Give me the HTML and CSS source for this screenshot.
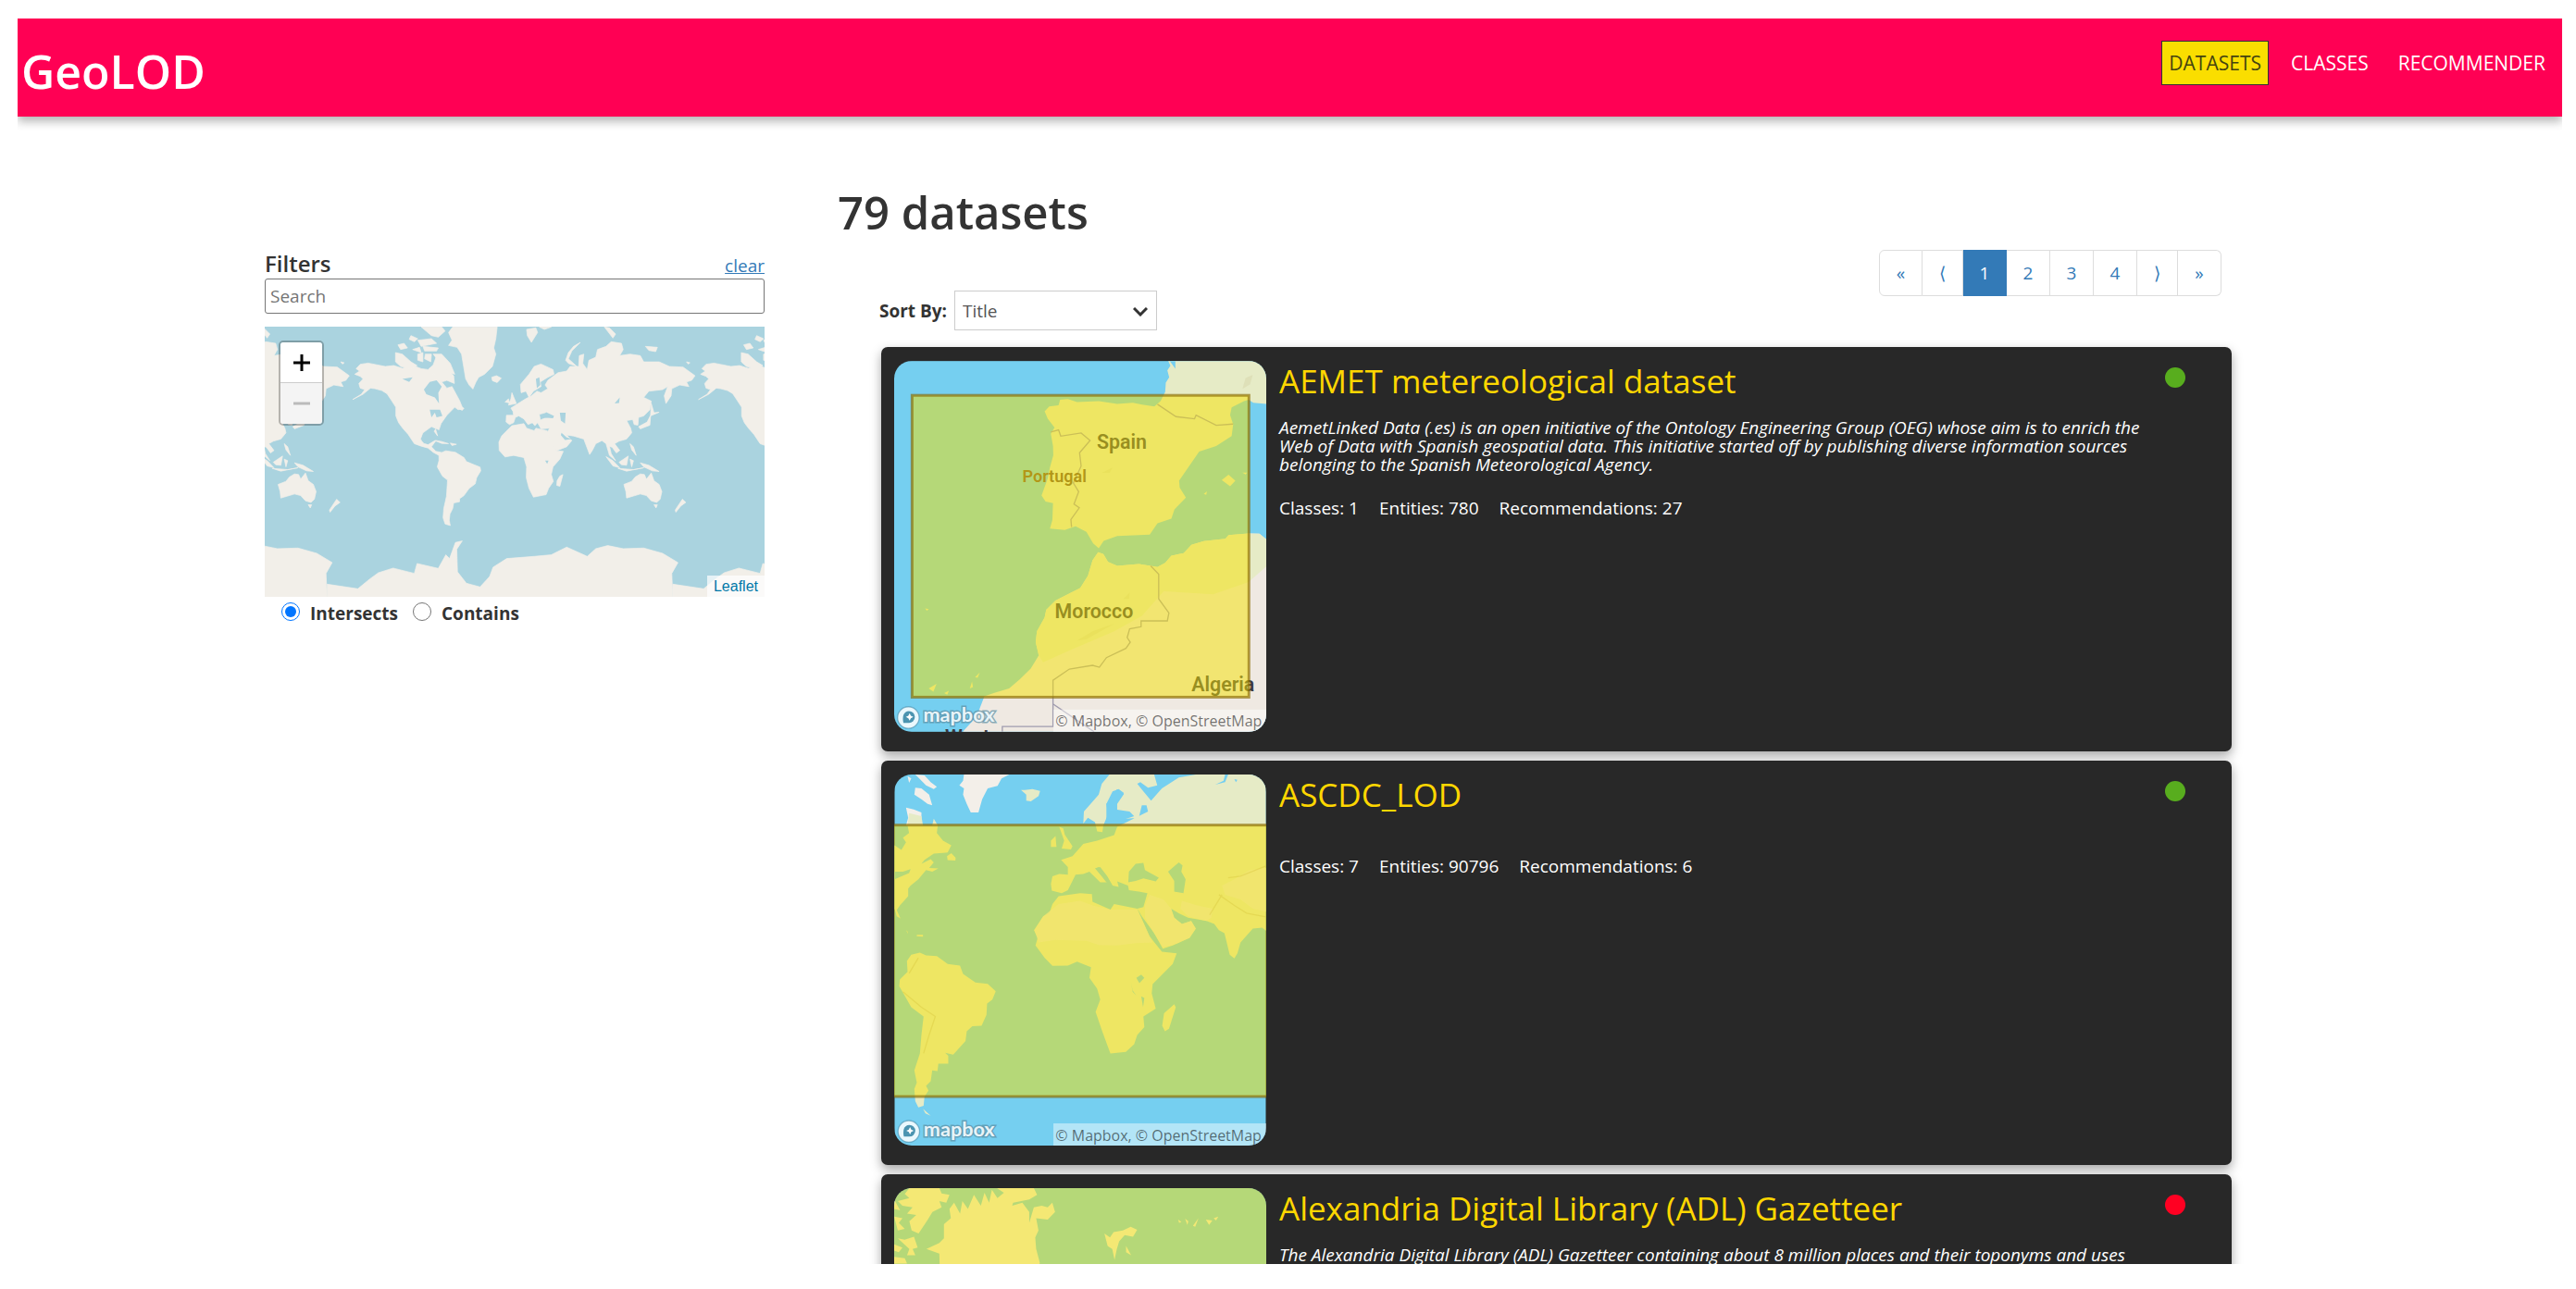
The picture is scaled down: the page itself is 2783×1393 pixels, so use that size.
FILE: index.html
```html
<!DOCTYPE html>
<html lang="en">
<head>
<meta charset="utf-8">
<title>GeoLOD</title>
<link rel="stylesheet" href="styles.css">
</head>
<body>
<div class="app">
  <header class="topbar">
    <h1 class="brand">GeoLOD</h1>
    <nav class="nav">
      <a class="nav-link active" href="#datasets">DATASETS</a>
      <a class="nav-link" href="#classes">CLASSES</a>
      <a class="nav-link" href="#recommender">RECOMMENDER</a>
    </nav>
  </header>

  <main class="content">
    <aside class="filters">
      <div class="filters-head">
        <h2 class="filters-title">Filters</h2>
        <a class="clear" href="#clear">clear</a>
      </div>
      <input class="search" type="text" placeholder="Search" aria-label="Search">
      <div class="map">
        <svg class="map-tiles" viewBox="43 311 1460 875" preserveAspectRatio="none" aria-hidden="true">
          <defs>
            <g id="world">
              <!-- North and Central America -->
              <path d="M306 465L320 455 310 447 322 433 345 429 395 440 420 437 445 446 475 436 500 447 520 450 535 435 545 405 560 420 570 445 595 470 597 495 575 485 560 490 575 510 590 505 612 550 622 577 608 580 598 572 575 598 558 625 552 645 530 635 505 655 498 675 508 690 520 692 528 677 542 682 530 700 543 715 558 718 552 728 535 718 520 704 500 698 480 690 462 660 446 640 434 622 426 600 426 572 412 548 400 528 385 518 365 512 352 510 330 530 300 547 325 530 335 515 322 510 318 495 330 480 322 472Z"/>
              <path d="M542 642L548 665 538 650Z"/>
              <path d="M425 395L445 400 470 425 488 437 470 447 440 440 425 425ZM432 370L450 365 460 380 440 385ZM470 340L490 350 480 360 465 352ZM490 355L530 350 545 365 500 375ZM500 312L560 312 570 325 550 345 530 340ZM475 385L495 378 500 395ZM490 400L505 395 505 425 490 420ZM512 400L530 400 528 425 510 415ZM535 400L560 400 585 430 598 465 580 460 560 435ZM505 375L550 380 545 390 510 390ZM612 570L625 575 620 582 612 578ZM535 462L550 475 545 490 530 480Z"/>
              <!-- Greenland and Iceland -->
              <path d="M580 330L592 312 722 312 718 350 712 380 718 400 708 440 685 465 668 475 660 490 651 513 640 500 630 480 624 440 618 400 605 378 580 372 590 355ZM706 475L720 470 734 478 722 492 708 486Z"/>
              <path d="M535 678L560 683 580 690 560 689ZM585 688L603 692 590 696Z"/>
              <!-- South America -->
              <path d="M552 722L572 713 600 718 625 735 632 748 672 766 674 778 662 800 658 820 640 835 625 858 612 868 612 878 595 882 592 900 584 918 582 938 585 955 570 950 564 930 566 900 574 860 577 808 562 795 547 765 552 745Z"/>
              <!-- Europe and Asia -->
              <path d="M749 598L770 598 768 585 762 575 790 555 805 545 822 535 838 520 850 525 870 512 862 500 870 485 885 472 900 460 925 455 935 440 960 440 962 405 975 400 972 430 985 450 990 420 1010 410 1015 385 1040 375 1055 360 1085 365 1090 385 1080 405 1110 400 1140 405 1150 425 1195 425 1225 440 1265 442 1300 470 1290 485 1275 490 1282 505 1255 500 1232 512 1230 535 1215 560 1210 535 1220 505 1205 515 1165 520 1150 540 1172 552 1168 580 1150 600 1135 605 1133 630 1122 628 1118 612 1100 615 1112 640 1115 655 1100 675 1078 682 1065 690 1080 712 1070 720 1058 702 1050 698 1055 722 1068 745 1050 728 1040 690 1028 680 1010 690 1000 712 992 725 975 675 945 665 925 662 940 680 925 700 895 713 882 690 868 655 875 640 850 642 838 618 860 608 880 605 862 590 845 595 848 612 832 632 820 615 800 590 820 610 830 620 812 628 800 610 785 600 775 605 770 622 758 628 748 620Z"/>
              <path d="M790 498L815 465 830 440 850 432 885 450 888 465 870 475 848 490 850 505 828 520 815 540 806 520 792 525Z"/>
              <path d="M765 525L778 560 755 565 762 545ZM745 555L755 545 758 558ZM922 420L930 395 945 375 965 362 940 390 930 415 955 440 930 430ZM808 320L835 315 840 330 822 362 810 340ZM845 312L880 312 860 320ZM1035 312L1050 315 1068 335 1060 348ZM1155 375L1190 378 1185 392 1165 388ZM1275 425L1285 428 1280 432ZM1172 560L1180 590 1195 588 1170 600 1168 630 1140 642 1135 635 1160 620 1170 598Z"/>
              <!-- Africa -->
              <path d="M765 632L800 625 808 640 830 648 835 640 868 648 880 680 895 713 915 715 905 740 885 765 880 790 886 812 872 835 865 855 828 863 815 835 807 800 808 765 800 735 770 728 745 733 728 712 727 685 735 665 748 650ZM905 795L914 790 905 828 896 825 897 810Z"/>
              <!-- South-east Asia and Oceania -->
              <path d="M1040 732L1060 745 1080 768 1060 762ZM1078 750L1105 730 1100 760 1085 758ZM1110 690L1120 700 1128 728 1115 710ZM1075 770L1120 774 1150 768 1100 779ZM1110 740L1120 745 1115 765ZM1140 752L1165 760 1195 780 1175 778 1150 765ZM1092 822L1115 812 1125 798 1140 788 1152 790 1158 805 1172 785 1180 810 1195 822 1203 845 1198 870 1188 880 1172 875 1158 858 1140 853 1100 866 1098 845ZM1180 888L1190 888 1186 898ZM1263 870L1273 880 1258 892 1244 912 1242 905Z"/>
              <!-- Antarctica -->
              <path d="M225 1190L225 1145 315 1160 350 1128 375 1108 418 1093 480 1110 488 1078 550 1094 572 1050 583 1062 600 1010 620 1005 604 1032 606 1105 632 1142 672 1154 700 1120 710 1090 750 1062 830 1055 880 1050 925 1025 985 1055 1010 1030 1045 1020 1090 1030 1150 1028 1205 1045 1250 1075 1232 1110 1235 1190Z"/>
            </g>
          </defs>
          <rect class="sea-osm" x="43" y="311" width="1460" height="875"/>
          <g class="land-osm">
            <use href="#world" x="-1010"/><use href="#world"/><use href="#world" x="1010"/>
          </g>
          <g class="sea-osm">
            <path d="M508 515L525 490 545 485 560 505 550 525 552 560 540 540 515 530Z"/>
            <path d="M525 580L555 580 562 600 545 605 540 590 530 605ZM445 480L475 475 465 490Z"/>
            <path d="M852 605L865 588 888 600 885 608ZM905 590L922 590 920 625 908 615ZM835 480L845 475 848 500 838 510ZM910 655L925 670 940 675 920 678 908 662ZM862 745L872 745 868 755ZM1065 560L1080 540 1078 558Z"/>
            <path d="M505 660L530 650 545 675 520 692 502 682Z"/>
          </g>
        </svg>
        <div class="zoom">
          <button class="zoom-btn" type="button" aria-label="Zoom in"><svg viewBox="0 0 18 18"><path d="M9 0V18M0 9H18"/></svg></button>
          <button class="zoom-btn" type="button" aria-label="Zoom out" disabled><svg viewBox="0 0 18 18"><path d="M0 9H18"/></svg></button>
        </div>
        <a class="map-credit" href="#leaflet">Leaflet</a>
      </div>
      <div class="modes">
        <label class="mode"><input type="radio" name="mode" checked>Intersects</label>
        <label class="mode"><input type="radio" name="mode">Contains</label>
      </div>
    </aside>

    <section class="results">
      <h2 class="count">79 datasets</h2>
      <div class="toolbar">
        <div class="sort">
          <label for="sort">Sort By:</label>
          <span class="select-wrap">
            <select id="sort" class="select"><option>Title</option><option>Entities</option></select>
            <svg class="chevron" viewBox="0 0 16 10" aria-hidden="true"><path d="M1 1L8 8 15 1"/></svg>
          </span>
        </div>
        <nav class="pages" aria-label="Pages">
          <a class="page edge" href="#first">«</a>
          <a class="page" href="#prev">⟨</a>
          <a class="page num current" href="#1">1</a>
          <a class="page num" href="#2">2</a>
          <a class="page num" href="#3">3</a>
          <a class="page num" href="#4">4</a>
          <a class="page" href="#next">⟩</a>
          <a class="page edge" href="#last">»</a>
        </nav>
      </div>

      <div class="cards">
        <article class="card">
          <svg class="thumb" viewBox="78 75 1204 1200" aria-hidden="true">
            <defs>
              <g id="mapbox-logo">
                <circle class="logo-disc" cx="124" cy="1229" r="35"/>
                <path class="logo-drop" d="M108 1246C104 1228 107 1208 126 1208A19 19 0 1 1 126 1246Z"/>
                <path class="logo-star" d="M128 1215L132 1223 140 1227 132 1231 128 1239 124 1231 116 1227 124 1223Z"/>
                <text class="logo-word" x="172" y="1244">mapbox</text>
              </g>
              <g id="mapbox-credit">
                <rect class="credit-bg" x="593" y="1203" width="700" height="80"/>
                <text class="credit" x="600" y="1259">© Mapbox, © OpenStreetMap</text>
              </g>
            </defs>
            <rect class="sea" x="78" y="75" width="1204" height="1200"/>
            <path class="green" d="M965 75L972 90 962 105 968 128 957 145 955 175 940 205 920 222 880 216 850 210 800 214 740 205 670 208 640 198 615 200 610 218 580 222 565 238 575 262 597 290 585 310 592 350 593 380 582 420 575 455 555 510 568 530 592 535 590 590 582 617 630 622 665 610 700 628 722 665 740 681 756 657 800 641 905 637 930 600 975 585 985 555 1022 517 1002 485 1000 462 1050 390 1065 368 1120 350 1170 318 1175 280 1165 250 1170 225 1210 205 1225 200 1240 210 1282 214 1282 75Z"/>
            <path class="sea" d="M970 75L988 100 988 75Z"/>
            <path class="sand" d="M738 694L755 700 770 725 800 738 870 732 930 742 955 728 975 705 1015 697 1040 670 1080 658 1150 650 1160 638 1225 633 1260 634 1282 652 1282 1275 300 1275 345 1225 370 1160 400 1150 450 1135 485 1105 520 1070 546 1028 536 985 540 950 565 905 570 880 600 850 650 825 680 810 705 770 720 720Z"/>
            <path class="green" d="M738 694L755 700 770 725 800 738 870 732 930 742 955 728 975 705 1015 697 1040 670 1080 658 1150 650 1160 638 1225 633 1260 634 1282 652 1282 740 1225 790 1110 830 950 820 880 900 790 950 650 1010 560 1050 546 1028 536 985 540 950 565 905 570 880 600 850 650 825 680 810 705 770 720 720Z"/>
            <path class="green" d="M1138 460L1160 443 1182 462 1165 480ZM1205 436L1220 436 1215 442ZM1080 505L1090 497 1088 508ZM190 1135L215 1120 205 1145ZM240 1150L255 1142 250 1155ZM323 1135L330 1112 333 1130ZM340 1098L355 1083 348 1100ZM178 876L190 878 184 883Z"/>
            <path class="terrain" d="M1205 165L1215 130 1238 120 1230 150ZM750 437L785 420 775 437ZM820 845L840 825 838 845ZM670 980L720 950 790 925 700 975Z"/>
            <path class="border" d="M930 215L990 255 1050 262 1055 250 1120 283 1175 279M585 305L610 298 617 318 683 308 712 332 678 372 683 415 658 470 675 498 660 538 677 550 650 588 652 612M908 738L934 765V845L967 890 962 916H877V935L840 942 832 970 842 985 828 1005 765 1035 742 1066 720 1060 645 1072 592 1108V1258H428V1275M592 1185L725 1275"/>
            <g class="place">
              <text x="734" y="359">Spain</text>
              <text class="place-small" x="493" y="467">Portugal</text>
              <text x="598" y="908">Morocco</text>
              <text x="1040" y="1144">Algeria</text>
              <text x="243" y="1313">West</text>
            </g>
            <rect class="extent" x="136" y="186" width="1090" height="977"/>
            <use href="#mapbox-logo"/><use href="#mapbox-credit"/>
          </svg>
          <div class="info">
            <h3 class="title"><a href="#aemet">AEMET metereological dataset</a></h3>
            <p class="desc">AemetLinked Data (.es) is an open initiative of the Ontology Engineering Group (OEG) whose aim is to enrich the Web of Data with Spanish geospatial data. This initiative started off by publishing diverse information sources belonging to the Spanish Meteorological Agency.</p>
            <div class="stats"><span>Classes: 1</span><span>Entities: 780</span><span>Recommendations: 27</span></div>
          </div>
          <span class="status up"></span>
        </article>

        <article class="card">
          <svg class="thumb" viewBox="78 65 1204 1204" aria-hidden="true">
            <rect class="sea" x="78" y="65" width="1204" height="1204"/>
            <path class="ice" d="M303 65L450 65 425 78 412 102 380 110 362 145 350 188 325 188 312 160 300 130 303 110 288 100 300 85ZM145 65L175 68 195 90 215 105 205 112 180 100 160 80ZM145 108L165 110 190 130 200 165 185 160 165 145 142 130ZM120 70L132 78 125 92ZM115 172L140 178 165 188 165 230 115 230 122 205Z"/>
            <path class="green" d="M488 115L500 115 525 112 550 118 545 135 520 152 505 150 505 130Z"/>
            <!-- North America -->
            <path class="green" d="M78 295L100 310 115 285 105 270 125 255 120 230 125 190 165 200 170 230 200 230 205 208 218 230 215 255 235 280 262 295 250 318 205 322 175 342 165 355 195 340 205 350 190 368 220 370 200 380 180 375 155 405 130 425 122 435 122 460 95 490 85 505 97 532 85 525 78 500ZM248 330L262 320 276 335 275 344 250 343Z"/>
            <path class="sea" d="M78 380L105 380 130 372 125 385 78 405Z"/>
            <!-- South America -->
            <path class="green" d="M132 650L160 643 180 652 215 654 250 680 290 685 300 712 340 740 380 744 406 768 395 795 378 808 376 845 360 880 330 882 312 898 308 930 268 974 242 968 252 978 252 1003 220 1003 217 1027 200 1025 195 1060 180 1075 188 1090 175 1110 172 1140 155 1145 145 1125 142 1085 150 1065 142 1025 160 970 165 910 172 850 132 820 115 790 93 752 95 730 120 705 118 670ZM170 1150L195 1172 178 1165ZM115 570L120 575 122 582ZM150 585L170 585 170 591 150 590Z"/>
            <!-- Scandinavia and Eurasia -->
            <path class="green" d="M690 224L692 185 740 130 750 95 775 65 920 65 930 100 900 108 875 90 865 95 885 120 910 150 945 110 1000 75 1055 65 1282 65 1282 572 1270 562 1240 565 1200 610 1190 645 1180 662 1165 650 1148 580 1130 570 1115 550 1090 540 1030 530 1000 515 975 500 985 530 1010 550 1040 540 1055 565 1035 595 980 620 948 630 920 580 880 525 865 500 885 495 898 450 870 445 838 440 835 425 800 412 805 430 785 425 765 395 740 365 728 370 768 415 745 415 710 380 690 388 665 390 640 440 620 450 588 442 585 420 590 395 612 388 640 390 640 365 618 342 655 330 690 290 735 280 790 262 800 235 850 210 900 185 895 165 880 165 870 205 810 210 800 195 800 160 822 128 800 112 765 160 770 195 755 230 752 252 735 250 728 220 705 205Z"/>
            <path class="sea" d="M765 160L785 120 805 112 822 125 800 150 795 178 840 185 855 200 810 215 765 210ZM1118 98L1150 90 1160 65 1150 65 1145 85ZM1180 80L1190 82 1185 90Z"/>
            <path class="sea" d="M836 415L838 380 860 355 885 352 890 375 935 400 925 412 885 402 860 410ZM965 380L1000 350 1012 360 1008 380 1022 405 1015 450 985 445 985 410ZM730 370L745 365 768 395 785 425 765 415Z"/>
            <path class="green" d="M612 235L625 240 630 260 655 298 650 308 620 305 628 280ZM585 280L600 265 603 300 585 300Z"/>
            <!-- Africa -->
            <path class="green" d="M610 460L680 450 718 453 720 478 778 503 790 485 865 500 885 545 905 590 945 640 993 645 980 680 915 745 912 775 925 825 885 850 888 885 865 910 855 940 828 965 778 970 752 900 730 835 745 795 735 760 710 725 715 690 670 672 640 685 590 686 565 660 535 620 542 595 530 570 560 525 580 515 590 485ZM985 810L990 820 968 890 955 898 946 880 952 840Z"/>
            <path class="sand" d="M560 525L610 485 680 475 720 490 778 503 865 503 900 580 915 610 860 612 800 620 740 618 700 605 600 602 545 610 532 570ZM905 455L950 470 975 500 985 530 1010 550 1040 540 1055 565 1035 595 980 618 948 625 920 580 890 530 890 490ZM1010 475L1060 490 1110 500 1105 530 1090 540 1030 525 1005 500ZM1140 425L1180 405 1230 375 1282 368 1282 510 1240 500 1200 470 1150 455Z"/>
            <path class="sea" d="M862 725L878 714 888 725 872 742ZM845 740L850 765 862 782 850 770ZM878 785L888 790 884 820Z"/>
            <path class="relief" d="M1160 400L1200 395 1282 362M1130 455L1180 490 1220 515 1282 527M1100 520L1140 455M155 660L125 710M105 770L165 820 210 850 190 910 172 970"/>
            <rect class="extent" x="60" y="229" width="1240" height="881"/>
            <g transform="translate(0 -6)"><use href="#mapbox-logo"/><use href="#mapbox-credit"/></g>
          </svg>
          <div class="info">
            <h3 class="title"><a href="#ascdc">ASCDC_LOD</a></h3>
            <p class="desc"></p>
            <div class="stats"><span>Classes: 7</span><span>Entities: 90796</span><span>Recommendations: 6</span></div>
          </div>
          <span class="status up"></span>
        </article>

        <article class="card">
          <svg class="thumb" viewBox="52 103 807 1200" preserveAspectRatio="none" aria-hidden="true">
            <rect class="sea" x="52" y="103" width="807" height="1200"/>
            <path class="ice" d="M85 103L150 103 155 120 172 125 165 150 150 145 155 165 135 180 125 205 105 250 90 240 85 210 100 190 80 185 92 165 70 160 60 145 85 135 75 122ZM52 140L65 175 52 170ZM52 195L70 200 62 215 75 235 60 240ZM60 265L75 270 95 260 103 295 92 300 98 320 80 320 85 300ZM52 285L70 295 62 310 52 305ZM52 325L75 330 80 347 52 347Z"/>
            <path class="ice" d="M275 103L355 103 362 125 345 140 310 150 308 160 330 150 345 180 345 215 355 165 372 160 385 165 395 150 401 180 385 205 360 200 365 240 358 262 360 300 368 345 350 420 152 420 150 315 122 300 150 280 160 265 160 220 175 200 172 170 182 150 195 185 200 145 212 170 225 125 240 160 248 118 258 150 264 108 276 135 290 118Z"/>
            <path class="ice" d="M508 250L520 262 528 245 548 240 565 228 579 238 570 260 552 255 540 275 535 300 530 335 525 300 515 290ZM555 290L566 320 555 310ZM668 205L675 212 670 215ZM683 202L690 210 688 222ZM700 225L712 200 705 228ZM728 205L742 208 735 222ZM745 200L755 195 750 208Z"/>
            <rect class="extent" x="20" y="60" width="900" height="1300"/>
          </svg>
          <div class="info">
            <h3 class="title"><a href="#adl">Alexandria Digital Library (ADL) Gazetteer</a></h3>
            <p class="desc">The Alexandria Digital Library (ADL) Gazetteer containing about 8 million places and their toponyms and uses</p>
          </div>
          <span class="status down"></span>
        </article>
      </div>
    </section>
  </main>
</div>
</body>
</html>
```
FILE: styles.css
```css
* { box-sizing: border-box; }

body {
  margin: 0;
  background: #fff;
  color: #333;
  font-family: "Open Sans", "Noto Sans", sans-serif;
  font-size: 19px;
}

h1, h2, h3, p { margin: 0; }

.app {
  display: flex;
  flex-direction: column;
  height: 100vh;
  padding: 20px 15px 27px 19px;
}

/* Top bar */
.topbar {
  display: flex;
  flex: none;
  justify-content: space-between;
  align-items: flex-start;
  height: 106px;
  padding: 24px 10px 0 4px;
  background: #ff0054;
  box-shadow: 0 5px 10px rgba(0, 0, 0, 0.3);
  clip-path: inset(0 0 -20px 0);
}
.brand { color: #fff; font-size: 50px; font-weight: 600; line-height: 66px; }
.nav { display: flex; gap: 16px; }
.nav-link {
  padding: 0 7px;
  border: 1px solid transparent;
  color: #fff;
  font-size: 21px;
  line-height: 46px;
  text-decoration: none;
}
.nav-link.active { border-color: #333; background: #fade00; color: #444410; }

/* Page columns */
.content {
  display: grid;
  flex: 1;
  grid-template-columns: 267fr 540fr 79fr 1506fr 357fr;
  align-items: start;
  min-height: 0;
  overflow: hidden;
}

/* Filters */
.filters { grid-column: 2; padding-top: 144px; }
.filters-head { display: flex; justify-content: space-between; align-items: baseline; height: 31px; }
.filters-title { font-size: 24px; font-weight: 600; line-height: 30px; }
.clear { color: #337ab7; }
.search {
  display: block;
  width: 100%;
  height: 38px;
  padding: 0 5px;
  border: 1px solid #767676;
  border-radius: 3px;
  font: inherit;
}
.search::placeholder { color: #757575; }
.map { position: relative; height: 292px; margin-top: 14px; }
.map-tiles { display: block; width: 100%; height: 100%; }
.sea-osm { fill: #aad3df; }
.land-osm { fill: #f2efe9; stroke: #f2efe9; stroke-width: 2; stroke-linejoin: round; }
.zoom {
  position: absolute;
  top: 15px;
  left: 15px;
  border: 2px solid rgba(0, 0, 0, 0.25);
  border-radius: 5px;
  background-clip: padding-box;
}
.zoom-btn {
  display: grid;
  place-items: center;
  width: 45px;
  height: 44px;
  padding: 0;
  border: 0;
  border-bottom: 1px solid #ccc;
  border-radius: 3px 3px 0 0;
  background: #fff;
}
.zoom-btn:disabled { border-bottom: 0; border-radius: 0 0 3px 3px; background: #f4f4f4; }
.zoom-btn svg { width: 18px; height: 18px; stroke: #000; stroke-width: 3; }
.zoom-btn:disabled svg { stroke: #bbb; }
.map-credit {
  position: absolute;
  right: 0;
  bottom: 0;
  padding: 0 7px;
  background: rgba(255, 255, 255, 0.7);
  color: #0078a8;
  font: 16px/23px "Liberation Sans", Arial, sans-serif;
  text-decoration: none;
}
.modes { display: flex; gap: 16px; padding-left: 18px; }
.mode { display: flex; align-items: center; gap: 11px; font-weight: 700; line-height: 36px; }
.mode input { width: 20px; height: 20px; margin: 0 0 4px; }

/* Results */
.results { grid-column: 4; padding-top: 68px; }
.count { font-size: 49px; font-weight: 600; line-height: 70px; }
.toolbar { display: flex; justify-content: space-between; padding: 6px 11px 0 45px; height: 111px; }
.sort { display: flex; align-items: center; gap: 8px; height: 43px; margin-top: 44px; font-weight: 700; }
.select-wrap { position: relative; }
.select {
  display: block;
  width: 219px;
  height: 43px;
  padding: 0 8px;
  border: 1px solid #ccc;
  border-radius: 0;
  appearance: none;
  background: #fff;
  color: #555;
  font: inherit;
  font-weight: 400;
}
.chevron { position: absolute; top: 18px; right: 10px; width: 16px; height: 10px; fill: none; stroke: #333; stroke-width: 3; }
.pages { display: flex; height: 50px; }
.page {
  width: 44px;
  border: 1px solid #ddd;
  border-left-width: 0;
  color: #337ab7;
  line-height: 48px;
  text-align: center;
  text-decoration: none;
}
.page.edge, .page.num { width: 47px; }
.page:first-child { border-left-width: 1px; border-radius: 6px 0 0 6px; }
.page:last-child { border-radius: 0 6px 6px 0; }
.page.current { border-color: #337ab7; background: #337ab7; color: #fff; }

.cards { display: grid; gap: 10px; padding-left: 47px; }
.card {
  display: flex;
  height: 437px;
  padding: 15px 50px 0 14px;
  border-radius: 7px;
  background: #282828;
  box-shadow: 0 5px 12px rgba(0, 0, 0, 0.35);
  color: #fff;
}
.thumb { flex: none; width: 402px; height: 401px; border-radius: 19px; }
.info { flex: 1; padding: 0 20px 0 14px; }
.title { font-size: 35px; font-weight: 400; line-height: 44px; }
.title a { color: #ffd700; text-decoration: none; }
.desc { padding-top: 18px; font-size: 19px; font-style: italic; line-height: 20px; }
.stats { display: flex; gap: 22px; margin-top: 22px; line-height: 30px; }
.status { flex: none; width: 22px; height: 22px; margin-top: 7px; border-radius: 50%; }
.status.up { background: #58ad1e; }
.status.down { background: #ff0022; }

/* Thumbnail maps */
.sea { fill: #75cff0; }
.green { fill: #e6ebc6; }
.sand { fill: #efe9e2; }
.green + .sand { fill-opacity: 0.8; }
.ice { fill: #f3efe9; }
.terrain { fill: #c8c090; fill-opacity: 0.25; }
.border { fill: none; stroke: #a09cae; stroke-width: 4; }
.relief { fill: none; stroke: #b8a878; stroke-opacity: 0.4; stroke-width: 4; }
.extent { fill: #f5e100; fill-opacity: 0.5; stroke: #8a6a00; stroke-opacity: 0.65; stroke-width: 9; }
.place { fill: #3a3a42; font: 600 64px Roboto, sans-serif; }
.place-small { fill: #6f4a30; font-size: 54px; }
.logo-disc { fill: #fff; fill-opacity: 0.85; stroke: #4a90ad; stroke-opacity: 0.6; stroke-width: 4; }
.logo-drop { fill: #4b94b0; }
.logo-star { fill: #fff; }
.logo-word { fill: #e9f4f8; stroke: #5c8ea3; stroke-width: 9; paint-order: stroke; stroke-opacity: 0.7; font: 700 65px Lato, sans-serif; }
.credit-bg { fill: #fff; fill-opacity: 0.45; }
.credit { fill: #000; fill-opacity: 0.55; font: 48px "Open Sans", sans-serif; }
```
